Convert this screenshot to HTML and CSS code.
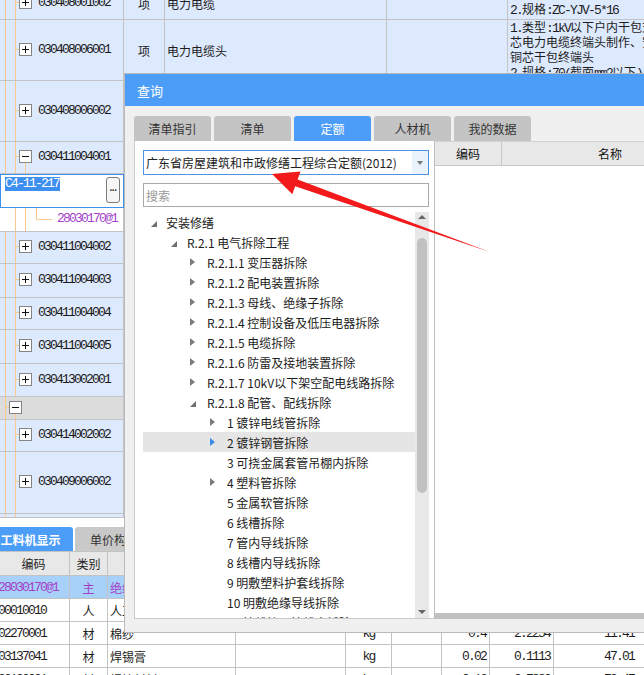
FILE: index.html
```html
<!DOCTYPE html>
<html lang="zh">
<head>
<meta charset="utf-8">
<title>查询</title>
<link rel="stylesheet" href="styles.css">
</head>
<body>
<div class="app">
  <div class="grid">
    <div class="row first">
      <div class="c1 tl"><span class="conn"></span><span class="box"><svg viewBox="0 0 11 11"><path d="M2 5.5h7M5.5 2v7"/></svg></span><span class="code">030408001002</span></div>
      <div class="c2">项</div>
      <div class="c3">电力电缆</div>
      <div class="c4"></div>
      <div class="c5 desc end"><div class="dl"><span class="m">2.</span>规格<span class="m">:ZC-YJV-5*16</span></div></div>
    </div>
    <div class="row h61">
      <div class="c1 tl"><span class="conn"></span><span class="box"><svg viewBox="0 0 11 11"><path d="M2 5.5h7M5.5 2v7"/></svg></span><span class="code">030408006001</span></div>
      <div class="c2">项</div>
      <div class="c3">电力电缆头</div>
      <div class="c4"></div>
      <div class="c5 desc top">
        <div class="dl"><span class="m">1.</span>类型<span class="m">:1kV</span>以下户内干包式三</div>
        <div class="dl">芯电力电缆终端头制作、安装</div>
        <div class="dl">铜芯干包终端头</div>
        <div class="dl"><span class="m">2.</span>规格<span class="m">:70(</span>截面<span class="m">mm2</span>以下<span class="m">)</span></div>
      </div>
    </div>
    <div class="row h61">
      <div class="c1 tl"><span class="conn"></span><span class="box"><svg viewBox="0 0 11 11"><path d="M2 5.5h7M5.5 2v7"/></svg></span><span class="code">030408006002</span></div>
      <div class="c2">项</div><div class="c3"></div><div class="c4"></div><div class="c5"></div>
    </div>
    <div class="row h32">
      <div class="c1 tl-open"><span class="conn"></span><span class="box"><svg viewBox="0 0 11 11"><path d="M2 5.5h7"/></svg></span><span class="code">030411004001</span></div>
      <div class="c2">项</div><div class="c3"></div><div class="c4"></div><div class="c5"></div>
    </div>
    <div class="row h34 white">
      <div class="c1 editbox"><span class="selected code">C4-11-217</span><span class="dots">···</span></div>
      <div class="c2"></div><div class="c3"></div><div class="c4"></div><div class="c5"></div>
    </div>
    <div class="row h24 white">
      <div class="c1 tl-child"><span class="conn long"></span><span class="code purple">28030170@1</span></div>
      <div class="c2"></div><div class="c3"></div><div class="c4"></div><div class="c5"></div>
    </div>
    <div class="row h32">
      <div class="c1 tl"><span class="conn"></span><span class="box"><svg viewBox="0 0 11 11"><path d="M2 5.5h7M5.5 2v7"/></svg></span><span class="code">030411004002</span></div>
      <div class="c2">项</div><div class="c3"></div><div class="c4"></div><div class="c5"></div>
    </div>
    <div class="row h34">
      <div class="c1 tl"><span class="conn"></span><span class="box"><svg viewBox="0 0 11 11"><path d="M2 5.5h7M5.5 2v7"/></svg></span><span class="code">030411004003</span></div>
      <div class="c2">项</div><div class="c3"></div><div class="c4"></div><div class="c5"></div>
    </div>
    <div class="row h32">
      <div class="c1 tl"><span class="conn"></span><span class="box"><svg viewBox="0 0 11 11"><path d="M2 5.5h7M5.5 2v7"/></svg></span><span class="code">030411004004</span></div>
      <div class="c2">项</div><div class="c3"></div><div class="c4"></div><div class="c5"></div>
    </div>
    <div class="row h34">
      <div class="c1 tl"><span class="conn"></span><span class="box"><svg viewBox="0 0 11 11"><path d="M2 5.5h7M5.5 2v7"/></svg></span><span class="code">030411004005</span></div>
      <div class="c2">项</div><div class="c3"></div><div class="c4"></div><div class="c5"></div>
    </div>
    <div class="row h33">
      <div class="c1 tl"><span class="conn"></span><span class="box"><svg viewBox="0 0 11 11"><path d="M2 5.5h7M5.5 2v7"/></svg></span><span class="code">030413002001</span></div>
      <div class="c2">项</div><div class="c3"></div><div class="c4"></div><div class="c5"></div>
    </div>
    <div class="row h23 group">
      <div class="c1 tl-group"><span class="conn gconn"></span><span class="box"><svg viewBox="0 0 11 11"><path d="M2 5.5h7"/></svg></span></div>
      <div class="c2"></div><div class="c3"></div><div class="c4"></div><div class="c5"></div>
    </div>
    <div class="row h32">
      <div class="c1 tl"><span class="conn"></span><span class="box"><svg viewBox="0 0 11 11"><path d="M2 5.5h7M5.5 2v7"/></svg></span><span class="code">030414002002</span></div>
      <div class="c2">项</div><div class="c3"></div><div class="c4"></div><div class="c5"></div>
    </div>
    <div class="row h62">
      <div class="c1 tl"><span class="conn"></span><span class="box"><svg viewBox="0 0 11 11"><path d="M2 5.5h7M5.5 2v7"/></svg></span><span class="code">030409006002</span></div>
      <div class="c2">项</div><div class="c3"></div><div class="c4"></div><div class="c5"></div>
    </div>
    <div class="row h4">
      <div class="c1 tl"></div><div class="c2"></div><div class="c3"></div><div class="c4"></div><div class="c5"></div>
    </div>
  </div>

  <div class="bpanel">
    <div class="btabs">
      <div class="btab on">工料机显示</div>
      <div class="btab">单价构成</div>
    </div>
    <div class="btable">
      <div class="brow bhead">
        <div class="bc w1 ctr">编码</div><div class="bc w2 ctr">类别</div><div class="bc w3 ctr">名称</div><div class="bc w4 ctr">规格及型号</div><div class="bc w5 ctr">单位</div><div class="bc w6 ctr">损耗率</div><div class="bc w7 ctr">含量</div><div class="bc w8 ctr">数量</div><div class="bc w9 ctr">定额价</div>
      </div>
      <div class="brow main">
        <div class="bc w1"><span class="code bcode">28030170@1</span></div><div class="bc w2 ctr">主</div><div class="bc w3">绝缘导线</div><div class="bc w4"></div><div class="bc w5 ctr">m</div><div class="bc w6"></div><div class="bc w7 rt"><span class="m">0</span></div><div class="bc w8 rt"><span class="m">0</span></div><div class="bc w9 rt"><span class="m">0</span></div>
      </div>
      <div class="brow">
        <div class="bc w1"><span class="code bcode">00010010</span></div><div class="bc w2 ctr">人</div><div class="bc w3">人工费</div><div class="bc w4"></div><div class="bc w5 ctr">元</div><div class="bc w6"></div><div class="bc w7 rt"><span class="m">19.4</span></div><div class="bc w8 rt"><span class="m">107.9252</span></div><div class="bc w9 rt"><span class="m">1</span></div>
      </div>
      <div class="brow">
        <div class="bc w1"><span class="code bcode">02270001</span></div><div class="bc w2 ctr">材</div><div class="bc w3">棉纱</div><div class="bc w4"></div><div class="bc w5 ctr"><span class="m">kg</span></div><div class="bc w6"></div><div class="bc w7 rt"><span class="m">0.4</span></div><div class="bc w8 rt"><span class="m">2.2254</span></div><div class="bc w9 rt"><span class="m">11.41</span></div>
      </div>
      <div class="brow">
        <div class="bc w1"><span class="code bcode">03137041</span></div><div class="bc w2 ctr">材</div><div class="bc w3">焊锡膏</div><div class="bc w4"></div><div class="bc w5 ctr"><span class="m">kg</span></div><div class="bc w6"></div><div class="bc w7 rt"><span class="m">0.02</span></div><div class="bc w8 rt"><span class="m">0.1113</span></div><div class="bc w9 rt"><span class="m">47.01</span></div>
      </div>
      <div class="brow">
        <div class="bc w1"><span class="code bcode">03130001</span></div><div class="bc w2 ctr">材</div><div class="bc w3">焊接材料</div><div class="bc w4"></div><div class="bc w5 ctr"><span class="m">kg</span></div><div class="bc w6"></div><div class="bc w7 rt"><span class="m">0.16</span></div><div class="bc w8 rt"><span class="m">0.7880</span></div><div class="bc w9 rt"><span class="m">70.47</span></div>
      </div>
    </div>
  </div>
</div>

<div class="dialog">
  <div class="dlg-title">查询</div>
  <div class="dlg-body">
    <div class="tabs">
      <div class="tab">清单指引</div>
      <div class="tab">清单</div>
      <div class="tab active">定额</div>
      <div class="tab">人材机</div>
      <div class="tab">我的数据</div>
    </div>
    <div class="panes">
      <div class="lpane">
        <div class="select"><span class="sel-text">广东省房屋建筑和市政修缮工程综合定额(2012)</span><span class="sel-btn"><i class="caret"></i></span></div>
        <div class="search">搜索</div>
        <div class="treewrap">
          <div class="tree">
            <div class="node l1"><span class="slot"><i class="tri open"></i></span>安装修缮</div>
            <div class="node l2"><span class="slot"><i class="tri open"></i></span>R.2.1 电气拆除工程</div>
            <div class="node l3"><span class="slot"><i class="tri closed"></i></span>R.2.1.1 变压器拆除</div>
            <div class="node l3"><span class="slot"><i class="tri closed"></i></span>R.2.1.2 配电装置拆除</div>
            <div class="node l3"><span class="slot"><i class="tri closed"></i></span>R.2.1.3 母线、绝缘子拆除</div>
            <div class="node l3"><span class="slot"><i class="tri closed"></i></span>R.2.1.4 控制设备及低压电器拆除</div>
            <div class="node l3"><span class="slot"><i class="tri closed"></i></span>R.2.1.5 电缆拆除</div>
            <div class="node l3"><span class="slot"><i class="tri closed"></i></span>R.2.1.6 防雷及接地装置拆除</div>
            <div class="node l3"><span class="slot"><i class="tri closed"></i></span>R.2.1.7 10kV以下架空配电线路拆除</div>
            <div class="node l3"><span class="slot"><i class="tri open"></i></span>R.2.1.8 配管、配线拆除</div>
            <div class="node l4"><span class="slot"><i class="tri closed"></i></span>1 镀锌电线管拆除</div>
            <div class="node l4 sel"><span class="slot"><i class="tri closed"></i></span>2 镀锌钢管拆除</div>
            <div class="node l4"><span class="slot"></span>3 可挠金属套管吊棚内拆除</div>
            <div class="node l4"><span class="slot"><i class="tri closed"></i></span>4 塑料管拆除</div>
            <div class="node l4"><span class="slot"></span>5 金属软管拆除</div>
            <div class="node l4"><span class="slot"></span>6 线槽拆除</div>
            <div class="node l4"><span class="slot"></span>7 管内导线拆除</div>
            <div class="node l4"><span class="slot"></span>8 线槽内导线拆除</div>
            <div class="node l4"><span class="slot"></span>9 明敷塑料护套线拆除</div>
            <div class="node l4"><span class="slot"></span>10 明敷绝缘导线拆除</div>
            <div class="node l4"><span class="slot"></span>11 接线箱、接线盒拆除</div>
          </div>
          <div class="vscroll"><i class="up"></i><div class="thumb"></div><i class="down"></i></div>
        </div>
      </div>
      <div class="rpane">
        <div class="rhead"><div class="rh1">编码</div><div class="rh2">名称</div></div>
        <div class="rbody"></div>
        <div class="hscroll"></div>
      </div>
    </div>
  </div>
</div>

<svg class="arrow" width="644" height="675" viewBox="0 0 644 675">
  <polygon points="272,174 300.5,171.6 297.6,179.6 490.5,252.3 295.2,186.2 292.3,194.2" fill="#f21a1a"/>
</svg>
</body>
</html>
```

FILE: styles.css
```css
html, body {
  margin: 0;
  padding: 0;
  width: 644px;
  height: 675px;
  overflow: hidden;
}
body {
  position: relative;
  background: #fff;
  color: #1e1e1e;
  font-family: "Noto Sans CJK SC", "Liberation Sans", sans-serif;
  font-size: 12px;
  --t: #fcc88e;
  --line: #c3c3c3;
  --rowbg: #dde9fc;
  --blue: #4c9df7;
}
.m, .code {
  font-family: "Liberation Mono", monospace;
  letter-spacing: -1.8px;
  font-size: 13px;
}

/* ---------- main grid ---------- */
.grid {
  height: 518px;
  overflow: hidden;
}
.row {
  display: flex;
  box-sizing: border-box;
  border-bottom: 1px solid var(--line);
  background: var(--rowbg);
}
.row.first { height: 33px; margin-top: -13px; }
.h61 { height: 61px; }
.h62 { height: 62px; }
.h32 { height: 32px; }
.h33 { height: 33px; }
.h34 { height: 34px; }
.h24 { height: 24px; }
.h23 { height: 23px; }
.h4 { height: 4px; }
.row.white { background: #fff; }
.row.group { background: #dcdcdc; }
.row.h34.white { border-bottom: none; }

.c1, .c2, .c3, .c4, .c5 {
  box-sizing: border-box;
  overflow: hidden;
  white-space: nowrap;
}
.c1 {
  width: 124px;
  border-right: 1px solid var(--line);
  display: flex;
  align-items: center;
  padding-left: 16px;
  padding-bottom: 2px;
  background-repeat: no-repeat;
}
.c2 {
  width: 41px;
  border-right: 1px solid var(--line);
  display: flex;
  align-items: center;
  justify-content: center;
}
.c3 {
  width: 222px;
  border-right: 1px solid var(--line);
  display: flex;
  align-items: center;
  padding-left: 2px;
}
.c4 {
  width: 121px;
  border-right: 1px solid var(--line);
}
.c5 {
  flex: 1;
  padding-left: 2px;
}
.desc { display: flex; flex-direction: column; }
.desc.end { justify-content: flex-end; padding-bottom: 3px; }
.desc.top { justify-content: flex-start; margin-top: -1px; }
.dl { line-height: 15px; height: 15px; }

/* tree guide lines */
.tl {
  background-image: linear-gradient(var(--t), var(--t)), linear-gradient(var(--t), var(--t));
  background-position: 5px 0, 15px 0;
  background-size: 1px 100%, 1px 100%;
}
.tl-open {
  background-image: linear-gradient(var(--t), var(--t)), linear-gradient(var(--t), var(--t)), linear-gradient(var(--t), var(--t));
  background-position: 5px 0, 15px 0, 25px 100%;
  background-size: 1px 100%, 1px 100%, 1px 50%;
}
.tl-child {
  padding-left: 37px;
  background-image: linear-gradient(var(--t), var(--t)), linear-gradient(var(--t), var(--t)), linear-gradient(var(--t), var(--t));
  background-position: 15px 0, 25px 0, 36px 0;
  background-size: 1px 100%, 1px 100%, 1px 50%;
}
.tl-group {
  padding-left: 6px;
  background-image: linear-gradient(var(--t), var(--t)), linear-gradient(var(--t), var(--t));
  background-position: 5px 0, 15px 100%;
  background-size: 1px 100%, 1px 40%;
}
.conn {
  width: 3px;
  height: 1px;
  background: var(--t);
  flex: none;
}
.conn.long { width: 15px; margin-top: 1px; }
.box {
  flex: none;
  width: 13px;
  height: 13px;
  box-sizing: border-box;
  border: 1px solid #858585;
  background: #fff;
  display: flex;
}
.box svg {
  width: 11px;
  height: 11px;
  fill: none;
  stroke: #111;
  stroke-width: 1;
}
.c1 .code { margin-left: 6px; color: #1a1a1a; }
.tl-child .code { margin-left: 5px; }
.purple { color: #a33ec9 !important; }

/* edit row */
.c1.editbox {
  border: 1px solid #3d8ff0;
  background: #fff;
  padding: 2px 3px 0 4px;
  align-items: flex-start;
}
.c1 .selected {
  margin-left: 0;
  background: #3d8ff0;
  color: #fff;
  line-height: 14px;
  padding-right: 1px;
}
.dots {
  margin-left: auto;
  width: 14px;
  height: 26px;
  box-sizing: border-box;
  border: 1px solid #7c7c7c;
  border-radius: 3px;
  background: #f6f6f6;
  display: flex;
  align-items: center;
  justify-content: center;
  font-family: "Liberation Sans", sans-serif;
  font-size: 10px;
  font-weight: bold;
  letter-spacing: -1px;
  color: #333;
}

/* ---------- bottom panel ---------- */
.bpanel {
  padding-top: 9px;
  background: #fff;
}
.btabs {
  display: flex;
  gap: 2px;
  height: 24px;
}
.btab {
  width: 78px;
  border-radius: 3px 3px 0 0;
  background: #c9c9c9;
  color: #333;
  display: flex;
  align-items: center;
  justify-content: center;
  font-size: 12px;
}
.btab.on {
  width: 85px;
  margin-left: -12px;
  background: var(--blue);
  color: #fff;
  font-weight: bold;
}
.btable { border-top: 1px solid var(--line); }
.brow {
  display: flex;
  height: 23px;
  box-sizing: border-box;
  border-bottom: 1px solid var(--line);
  background: #fff;
}
.brow.bhead { height: 24px; background: #e8e8e8; }
.brow.main { background: #a7d1f8; color: #a33ec9; }
.bc {
  box-sizing: border-box;
  border-right: 1px solid var(--line);
  display: flex;
  align-items: center;
  overflow: hidden;
  white-space: nowrap;
  padding: 0 2px;
}
.bc.ctr { justify-content: center; }
.bc.rt { justify-content: flex-end; padding-right: 3px; }
.w1 { width: 70px; padding-left: 0; }
.w2 { width: 38px; }
.w3 { width: 128px; }
.w4 { width: 110px; }
.w5 { width: 46px; }
.w6 { width: 50px; }
.w7 { width: 48px; }
.w8 { width: 64px; }
.w9 { flex: 1; border-right: none; }
.bc.w9.rt { padding-right: 10px; }
.bcode { margin-left: -2px; }

/* ---------- dialog ---------- */
.dialog {
  position: absolute;
  left: 124px;
  top: 73px;
  width: 580px;
  height: 560px;
  box-sizing: border-box;
  border: 1px solid #b9b9b9;
  background: #f0f0f0;
  display: flex;
  flex-direction: column;
}
.dlg-title {
  height: 32px;
  flex: none;
  background: var(--blue);
  color: #fff;
  font-size: 13px;
  display: flex;
  align-items: center;
  padding-left: 12px;
}
.dlg-body {
  flex: 1;
  display: flex;
  flex-direction: column;
  padding: 10px 0 13px 9px;
  min-height: 0;
}
.tabs {
  display: flex;
  gap: 3px;
  height: 25px;
  flex: none;
}
.tab {
  width: 77px;
  border-radius: 3px 3px 0 0;
  background: #c4c4c4;
  color: #333;
  display: flex;
  align-items: center;
  justify-content: center;
  font-size: 12px;
}
.tab.active { background: var(--blue); color: #fff; }
.panes {
  flex: 1;
  display: flex;
  min-height: 0;
}
.lpane {
  width: 300px;
  flex: none;
  box-sizing: border-box;
  background: #fff;
  border-left: 1px solid #cacaca;
  border-bottom: 1px solid #cacaca;
  padding: 9px 5px 0 8px;
  display: flex;
  flex-direction: column;
  min-height: 0;
}
.select {
  height: 25px;
  flex: none;
  box-sizing: border-box;
  border: 1px solid #4d93dd;
  display: flex;
  align-items: center;
  background: #fff;
}
.sel-text {
  flex: 1;
  padding-left: 2px;
  color: #222;
  white-space: nowrap;
  overflow: hidden;
}
.sel-btn {
  width: 16px;
  align-self: stretch;
  background: #eaf2fc;
  display: flex;
  align-items: center;
  justify-content: center;
}
.caret {
  width: 0;
  height: 0;
  border-top: 4px solid #767676;
  border-left: 3.5px solid transparent;
  border-right: 3.5px solid transparent;
}
.search {
  height: 24px;
  flex: none;
  margin-top: 8px;
  box-sizing: border-box;
  border: 1px solid #a9a9a9;
  color: #9a9a9a;
  padding-left: 2px;
  display: flex;
  align-items: center;
}
.treewrap {
  flex: 1;
  margin-top: 5px;
  display: flex;
  min-height: 0;
}
.tree {
  flex: 1;
  overflow: hidden;
}
.node {
  height: 20px;
  display: flex;
  align-items: center;
  white-space: nowrap;
  color: #1c1c1c;
}
.node.sel { background: #e5e5e5; }
.l1 { padding-left: 8px; }
.l2 { padding-left: 28px; }
.l3 { padding-left: 47px; }
.l4 { padding-left: 67px; }
.slot {
  flex: none;
  display: flex;
  align-items: center;
  height: 20px;
}
.l1 .slot { width: 15px; }
.l2 .slot { width: 16px; }
.l3 .slot, .l4 .slot { width: 17px; }
.tri { width: 0; height: 0; display: block; }
.tri.closed {
  border-left: 5px solid #7c7c7c;
  border-top: 4px solid transparent;
  border-bottom: 4px solid transparent;
}
.sel .tri.closed { border-left-color: #3b8be6; }
.tri.open {
  border-bottom: 6px solid #6f6f6f;
  border-left: 6px solid transparent;
  margin-top: 4px;
}
.vscroll {
  width: 14px;
  flex: none;
  background: #e8e8e8;
  display: flex;
  flex-direction: column;
  align-items: center;
  padding-top: 3px;
  box-sizing: border-box;
}
.up {
  width: 0; height: 0;
  border-bottom: 4px solid #666;
  border-left: 4px solid transparent;
  border-right: 4px solid transparent;
}
.thumb {
  width: 10px;
  height: 255px;
  margin-top: 19px;
  border-radius: 5px;
  background: #c1c1c1;
}
.down {
  margin-top: auto;
  margin-bottom: 4px;
  width: 0; height: 0;
  border-top: 4px solid #666;
  border-left: 4px solid transparent;
  border-right: 4px solid transparent;
}
.rpane {
  flex: 1;
  background: #fff;
  border-left: 1px solid #bdbdbd;
  border-top: 1px solid #d2d2d2;
  display: flex;
  flex-direction: column;
  min-height: 0;
}
.rhead {
  height: 24px;
  flex: none;
  box-sizing: border-box;
  background: #e8e8e8;
  border-bottom: 1px solid #c8c8c8;
  display: flex;
}
.rh1, .rh2 {
  display: flex;
  align-items: center;
  justify-content: center;
  box-sizing: border-box;
  color: #111;
}
.rh1 { width: 67px; border-right: 1px solid #c8c8c8; }
.rh2 { width: 216px; }
.rbody { flex: 1; }
.hscroll {
  height: 6px;
  flex: none;
  background: #c0c0c0;
}

/* annotation arrow */
.arrow {
  position: absolute;
  left: 0;
  top: 0;
  pointer-events: none;
}
```
